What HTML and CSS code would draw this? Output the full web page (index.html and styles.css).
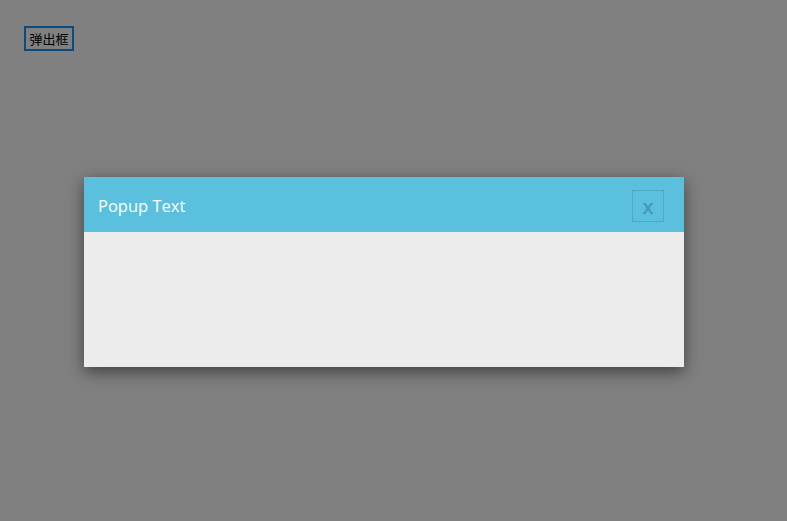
FILE: index.html
```html
<!DOCTYPE html>
<html lang="zh">
<head>
<meta charset="UTF-8">
<title>弹出框</title>
<link rel="stylesheet" href="styles.css">
</head>
<body>
<button class="open-btn">弹出框</button>

<div class="overlay">
    <div class="popup">
        <div class="popup-header">
            <span class="popup-title">Popup Text</span>
            <span class="popup-close">x</span>
        </div>
        <div class="popup-body"></div>
    </div>
</div>
</body>
</html>
```

FILE: styles.css
```css
body {
    margin: 0;
    padding: 26px 24px;
    background-color: #808080;
    font-family: "Open Sans", "Noto Sans CJK SC", sans-serif;
}
.open-btn {
    display: block;
    width: 50px;
    height: 25px;
    padding: 0;
    background: transparent;
    border: 2px solid #0d4a7e;
    color: #000000;
    font-size: 13px;
    font-family: "Noto Sans CJK SC", sans-serif;
    line-height: 19px;
}
.overlay {
    padding-top: 126px;
    padding-left: 60px;
}
.popup {
    width: 600px;
    box-shadow: 0 5px 15px rgba(0, 0, 0, 0.5);
}
.popup-header {
    background-color: #5bc0de;
    height: 55px;
    display: flex;
    align-items: center;
    justify-content: space-between;
    padding: 0 20px 0 14px;
}
.popup-title {
    color: #ffffff;
    font-size: 16.5px;
    padding-top: 1px;
}
.popup-close {
    width: 30px;
    height: 30px;
    border: 1px solid #4fa9c6;
    color: #4598b8;
    font-size: 20px;
    font-weight: 600;
    line-height: 32px;
    text-align: center;
    margin-top: 2px;
}
.popup-body {
    background-color: #ececec;
    height: 135px;
}
```
